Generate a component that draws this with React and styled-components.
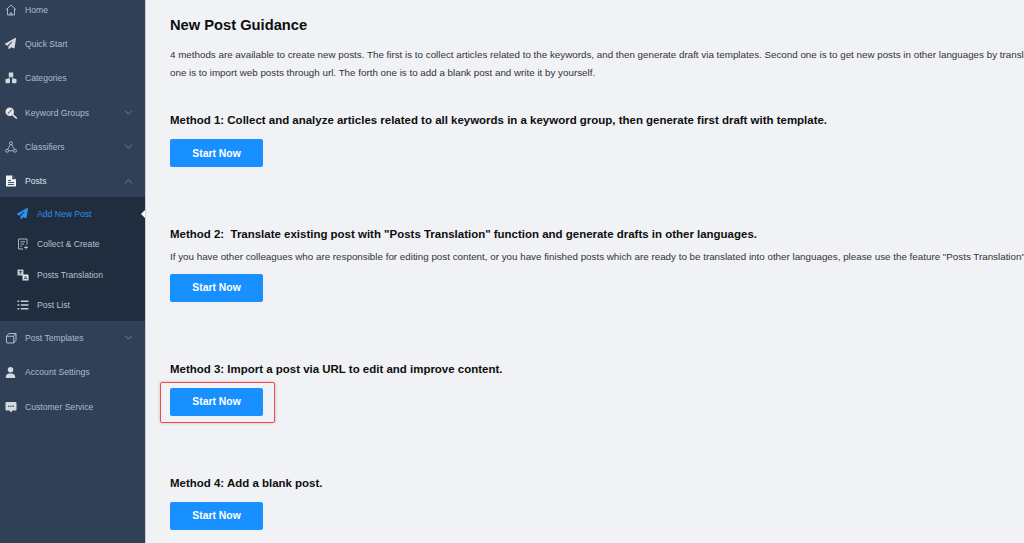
import React from 'react';
import styled, { createGlobalStyle } from 'styled-components';
import { ChevronDown, ChevronUp } from 'lucide-react';
import { FaPaperPlane, FaUser } from 'react-icons/fa6';

const Global = createGlobalStyle`
  html, body { margin: 0; padding: 0; height: 543px; overflow: hidden; background: #f0f2f5; }
  * { box-sizing: border-box; }
  body { font-family: "Liberation Sans", Arial, sans-serif; }
`;
const Page = styled.div`display: flex; width: 1024px; height: 543px; overflow: hidden;`;
const Sidebar = styled.aside`
  width: 146px; flex: none; height: 543px; background: #304057; border-right: 1px solid #c9ced6; overflow: hidden;
`;
const Menu = styled.nav`margin-top: -7.5px; display: flex; flex-direction: column;`;
const Row = styled.div`
  height: 34.3px; display: flex; align-items: center; font-size: 8.6px; flex: none;
`;
const IconBox = styled.span`width: 21px; height: 14px; display: flex; align-items: center; justify-content: center; flex: none; margin-right: 4px; color: #d3d9e1;`;
const Label = styled.span`flex: 1; white-space: nowrap; color: ${p => p.$bright ? '#dfe4ea' : '#aebbcb'};`;
const Caret = styled.span`width: 18px; margin-right: 8px; display: flex; justify-content: center; color: #8e9cae;`;
const SubMenu = styled.div`background: #202d3e; height: 123.5px; margin-top: -1px; padding-top: 1px; display: flex; flex-direction: column;`;
const SubRow = styled.div`
  height: 30.5px; display: flex; align-items: center; padding-left: 12px; font-size: 8.6px; position: relative; flex: none;
  color: ${p => p.$active ? '#2f8fea' : '#b7c1ce'};
  ${p => p.$active && `&::after { content: ""; position: absolute; right: 0; top: 50%; margin-top: -4px; border: 4px solid transparent; border-right: 4px solid #fff; }`}
`;
const SubIcon = styled.span`width: 21px; height: 14px; display: flex; align-items: center; justify-content: center; flex: none; margin-right: 4px; color: ${p => p.$active ? '#2f8fea' : '#c5ccd6'};`;
const Main = styled.main`flex: 1; min-width: 0; padding-left: 24px; overflow: hidden; background: #f0f2f5;`;
const Title = styled.h1`font-size: 14.7px; font-weight: 700; color: #0e0e0e; margin: 16px 0 0; line-height: 18px; white-space: nowrap;`;
const Text = styled.p`font-size: 9.8px; line-height: 17.5px; color: #333; margin: ${p => p.$top || 0}px 0 0; white-space: nowrap;`;
const Intro = styled.div`margin-top: 12px;`;
const Method = styled.section`display: flex; flex-direction: column; align-items: flex-start; margin-top: ${p => p.$gap}px;`;
const Heading = styled.h2`font-size: 11.47px; font-weight: 700; color: #0e0e0e; margin: 0; line-height: 16px; white-space: pre;`;
const Button = styled.button`
  width: 93px; height: 28px; border: none; border-radius: 2px; background: #1890ff; color: #fff; font: 700 10.4px "Liberation Sans", Arial, sans-serif;
  padding: 0; margin-top: ${p => p.$top || 0}px; display: block;
`;
const Marked = styled.div`
  position: relative; margin-top: 11px;
  &::after { content: ""; position: absolute; left: -10.5px; right: -11.5px; top: -6px; bottom: -7px; border: 1px solid #f0484e; border-radius: 2px; box-shadow: 0 0 3px rgba(120,60,60,.35); pointer-events: none; }
`;

const Svg = ({ children, size = 12 }) => <svg width={size} height={size} viewBox="0 0 24 24" fill="none" aria-hidden="true">{children}</svg>;
const HomeIcon = () => <Svg><path d="M2 11.5 12 2l10 9.5M5 9v13h14V9M10 22v-4h4v4" stroke="currentColor" strokeWidth="1.5" strokeLinejoin="round" /></Svg>;
const Tree = () => <Svg><g fill="currentColor"><rect x="7.5" y="1" width="9" height="8.5" rx="1" /><rect x="1" y="13.5" width="9" height="9" rx="2" /><rect x="14" y="13.5" width="9" height="9" rx="2" /></g><path d="M12 8 6 15M12 8l6 7" stroke="currentColor" strokeWidth="2" /></Svg>;
const KeywordIcon = () => <Svg><circle cx="9.5" cy="9.5" r="8.5" fill="#e4e7eb" /><path d="M5.5 13.5 13.5 5.5" stroke="#8a7f70" strokeWidth="2.4" /><path d="m16 16 6.5 6" stroke="#e4e7eb" strokeWidth="3.4" strokeLinecap="round" /></Svg>;
const Nodes = () => <Svg><g stroke="currentColor" strokeWidth="1.4"><circle cx="12" cy="4.5" r="3" /><circle cx="4" cy="19.5" r="3" /><circle cx="20" cy="19.5" r="3" /><path d="M10.6 7.2 5.4 16.8M13.4 7.2l5.2 9.6M7 19.5h10" /></g></Svg>;
const DocIcon = () => <Svg><path d="M2 1h13l7 7v15H2Z" fill="#eef0f3" /><path d="M15 1v7h7" fill="#304057" stroke="#304057" strokeWidth=".8" /><path d="M6 11h6M6 15h12M6 19h12" stroke="#304057" strokeWidth="1.8" /></Svg>;
const CollectIcon = () => <Svg><path d="M20 13V2H3v20h9M7 7.5h9M7 12h7M7 16.5h3M18 15v8M14 19h8" stroke="currentColor" strokeWidth="1.7" /></Svg>;
const TranslateIcon = () => <Svg><rect x="1" y="1" width="12" height="12" rx="1" fill="currentColor" /><rect x="11" y="11" width="12" height="12" rx="1" fill="#e4e8ed" /><path d="M4 5h6M7 3.5v6M4.5 10l4.5-3.5" stroke="#202d3e" strokeWidth="1.2" /><path d="m14 21 3-7 3 7M15 19h4" stroke="#202d3e" strokeWidth="1.3" /></Svg>;
const ListIcon = () => <Svg><g fill="currentColor"><rect x="1" y="3" width="3.5" height="3" /><rect x="1" y="10.5" width="3.5" height="3" /><rect x="1" y="18" width="3.5" height="3" /><rect x="7.5" y="3" width="15.5" height="3" /><rect x="7.5" y="10.5" width="15.5" height="3" /><rect x="7.5" y="18" width="15.5" height="3" /></g></Svg>;
const TemplateIcon = () => <Svg><path d="M3 8.5h13.5a1 1 0 0 1 1 1V22H4a1 1 0 0 1-1-1ZM3 8.5 7.5 3H22v13.5L17.5 22M17.5 8.5 22 3" stroke="currentColor" strokeWidth="1.6" strokeLinejoin="round" /></Svg>;
const ChatIcon = () => <Svg><path d="M3 2h18a2 2 0 0 1 2 2v13a2 2 0 0 1-2 2h-6l-3 4-3-4H3a2 2 0 0 1-2-2V4a2 2 0 0 1 2-2Z" fill="currentColor" /><g fill="#304057"><circle cx="7.5" cy="10.5" r="1.5" /><circle cx="12" cy="10.5" r="1.5" /><circle cx="16.5" cy="10.5" r="1.5" /></g></Svg>;

const Item = ({ icon, label, caret, bright }) => (
  <Row>
    <IconBox>{icon}</IconBox>
    <Label $bright={bright}>{label}</Label>
    {caret === 'down' && <Caret><ChevronDown size={13} strokeWidth={1.3} /></Caret>}
    {caret === 'up' && <Caret><ChevronUp size={13} strokeWidth={1.3} /></Caret>}
  </Row>
);
const Sub = ({ icon, label, active }) => (
  <SubRow $active={active}><SubIcon $active={active}>{icon}</SubIcon><span>{label}</span></SubRow>
);

export default function App() {
  return (
    <Page>
      <Global />
      <Sidebar>
        <Menu>
          <Item icon={<HomeIcon />} label="Home" />
          <Item icon={<FaPaperPlane size={11} />} label="Quick Start" />
          <Item icon={<Tree />} label="Categories" />
          <Item icon={<KeywordIcon />} label="Keyword Groups" caret="down" />
          <Item icon={<Nodes />} label="Classifiers" caret="down" />
          <Item icon={<DocIcon />} label="Posts" caret="up" bright />
          <SubMenu>
            <Sub icon={<FaPaperPlane size={11} />} label="Add New Post" active />
            <Sub icon={<CollectIcon />} label="Collect & Create" />
            <Sub icon={<TranslateIcon />} label="Posts Translation" />
            <Sub icon={<ListIcon />} label="Post List" />
          </SubMenu>
          <Item icon={<TemplateIcon />} label="Post Templates" caret="down" />
          <Item icon={<FaUser size={11} />} label="Account Settings" />
          <Item icon={<ChatIcon />} label="Customer Service" />
        </Menu>
      </Sidebar>
      <Main>
        <Title>New Post Guidance</Title>
        <Intro>
          <Text>4 methods are available to create new posts. The first is to collect articles related to the keywords, and then generate draft via templates. Second one is to get new posts in other languages by translating existing posts. The third</Text>
          <Text>one is to import web posts through url. The forth one is to add a blank post and write it by yourself.</Text>
        </Intro>
        <Method $gap={31}>
          <Heading>Method 1: Collect and analyze articles related to all keywords in a keyword group, then generate first draft with template.</Heading>
          <Button $top={11}>Start Now</Button>
        </Method>
        <Method $gap={59}>
          <Heading>Method 2:  Translate existing post with "Posts Translation" function and generate drafts in other languages.</Heading>
          <Text $top={6}>If you have other colleagues who are responsible for editing post content, or you have finished posts which are ready to be translated into other languages, please use the feature "Posts Translation" to create drafts.</Text>
          <Button $top={8.25}>Start Now</Button>
        </Method>
        <Method $gap={59}>
          <Heading>Method 3: Import a post via URL to edit and improve content.</Heading>
          <Marked><Button>Start Now</Button></Marked>
        </Method>
        <Method $gap={59}>
          <Heading>Method 4: Add a blank post.</Heading>
          <Button $top={11}>Start Now</Button>
        </Method>
      </Main>
    </Page>
  );
}
